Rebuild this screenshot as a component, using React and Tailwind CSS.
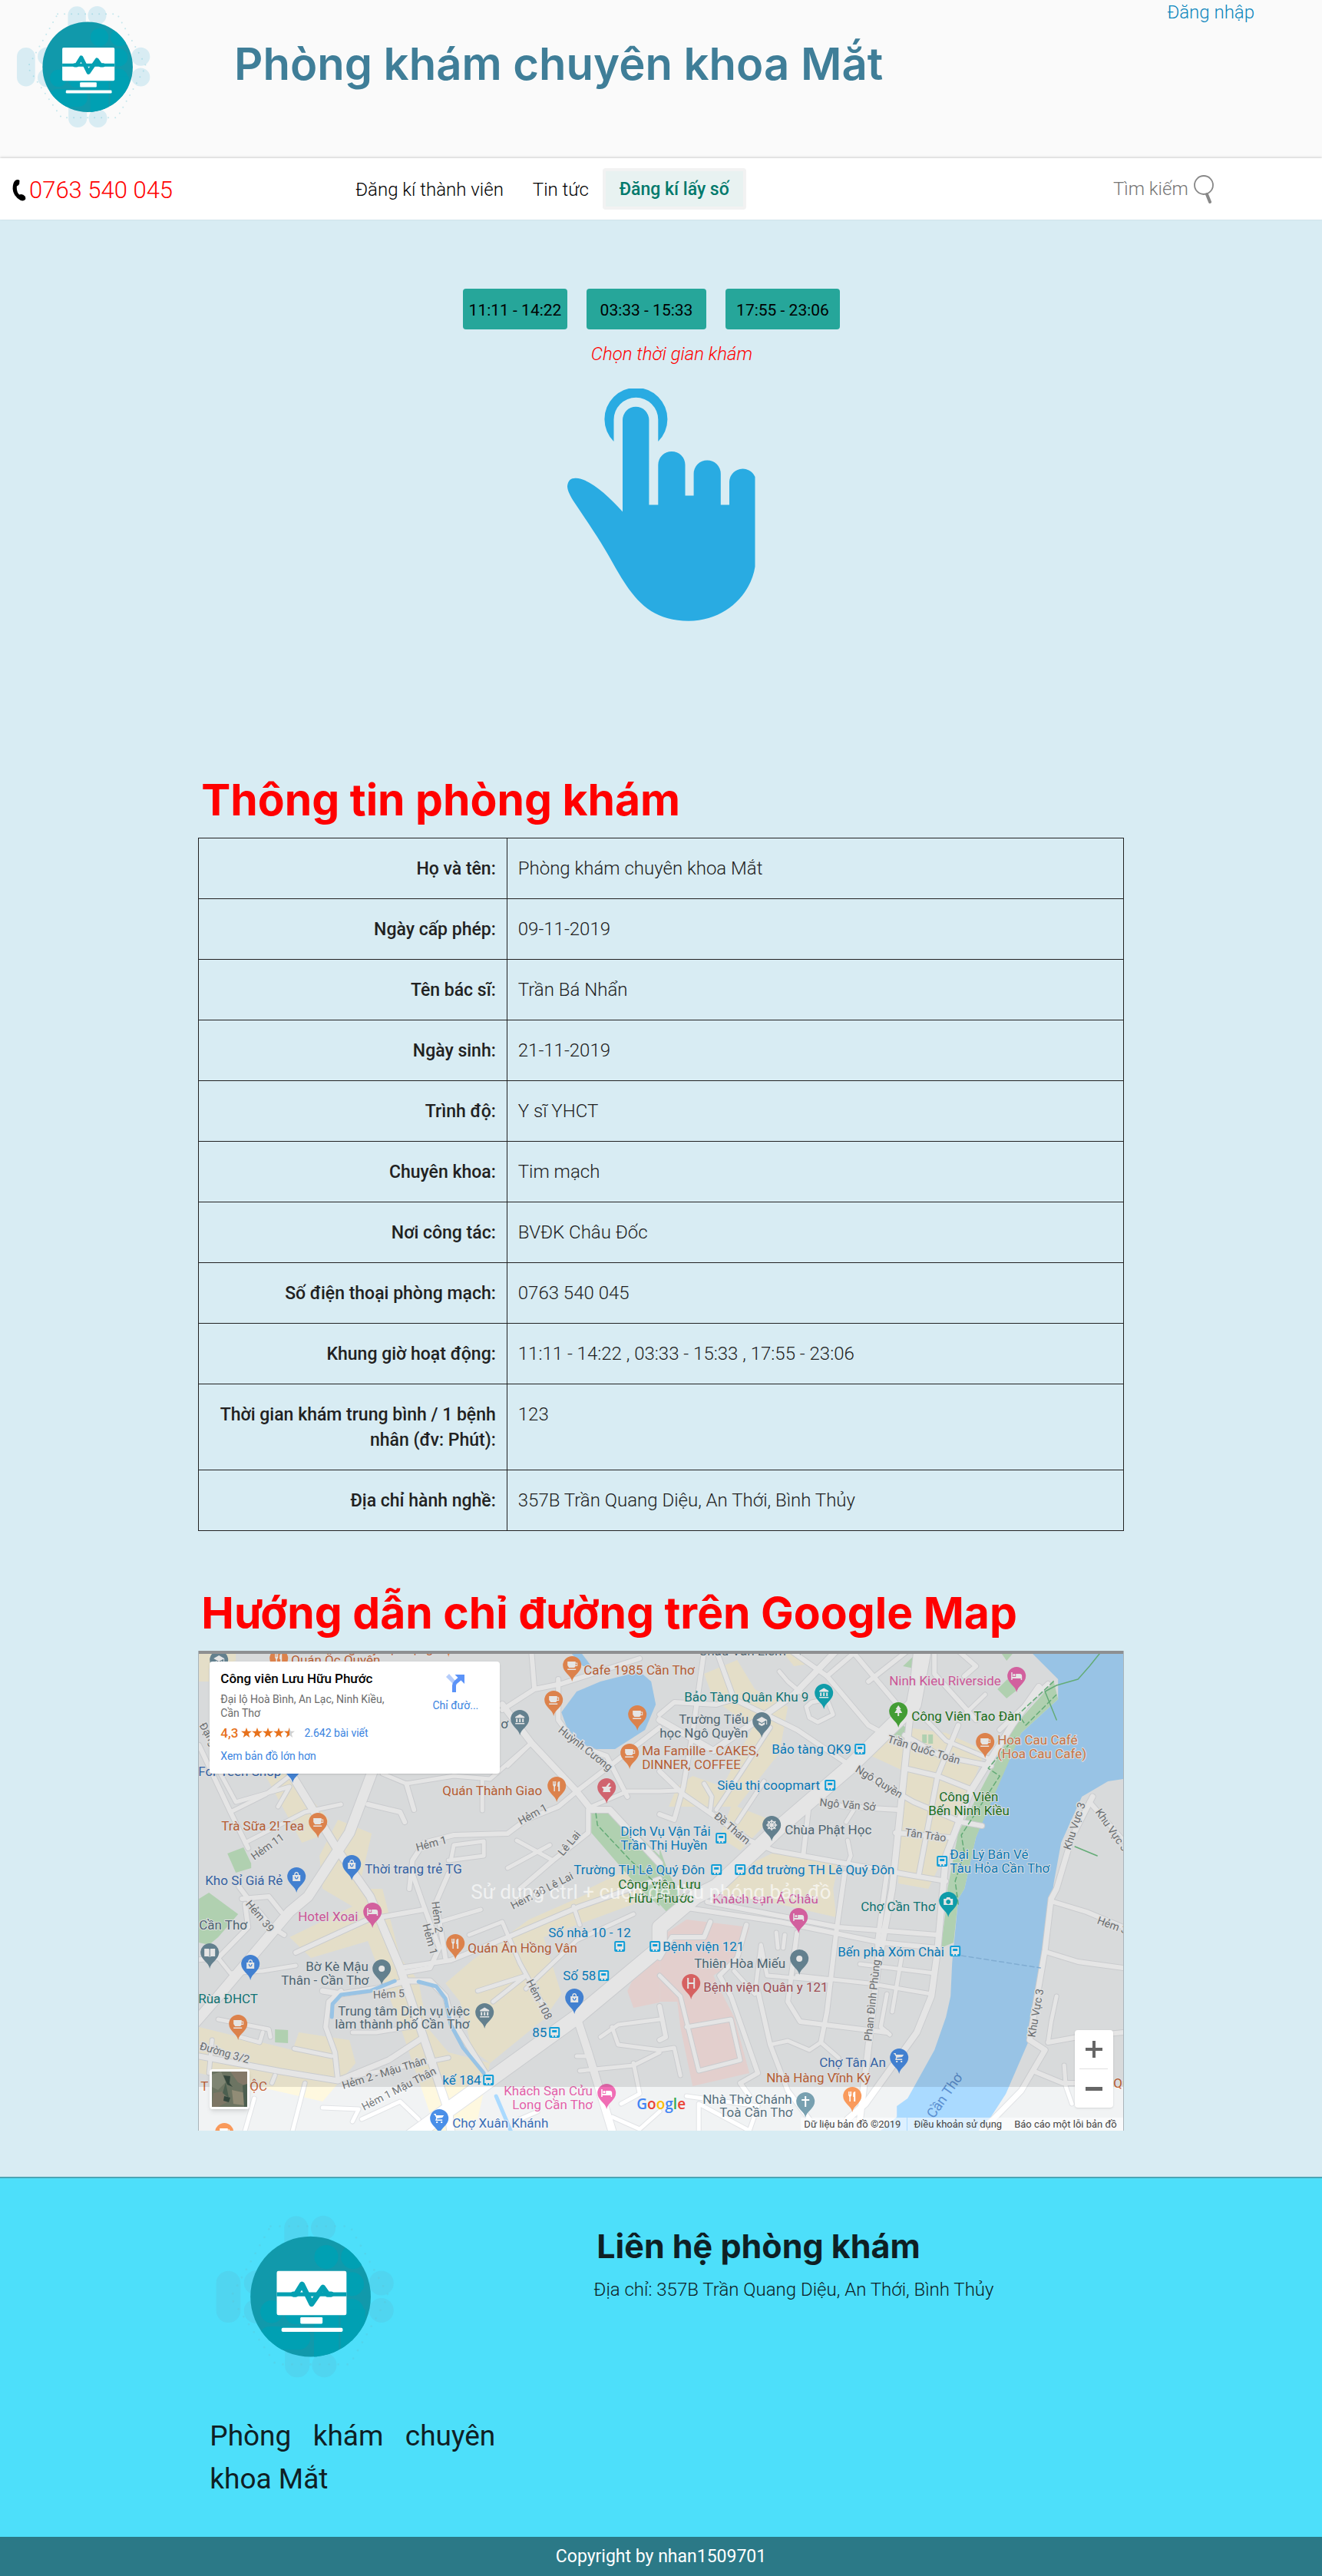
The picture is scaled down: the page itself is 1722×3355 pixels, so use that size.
import React from "react";

const SLOTS = [
  { label: "11:11 - 14:22", width: "w-[136px]" },
  { label: "03:33 - 15:33", width: "w-[156px]" },
  { label: "17:55 - 23:06", width: "w-[149px]" },
];

const INFO = [
  ["Họ và tên:", "Phòng khám chuyên khoa Mắt"],
  ["Ngày cấp phép:", "09-11-2019"],
  ["Tên bác sĩ:", "Trần Bá Nhẩn"],
  ["Ngày sinh:", "21-11-2019"],
  ["Trình độ:", "Y sĩ YHCT"],
  ["Chuyên khoa:", "Tim mạch"],
  ["Nơi công tác:", "BVĐK Châu Đốc"],
  ["Số điện thoại phòng mạch:", "0763 540 045"],
  ["Khung giờ hoạt động:", "11:11 - 14:22 , 03:33 - 15:33 , 17:55 - 23:06"],
  ["Thời gian khám trung bình / 1 bệnh nhân (đv: Phút):", "123"],
  ["Địa chỉ hành nghề:", "357B Trần Quang Diệu, An Thới, Bình Thủy"],
];

function Logo({ className }) {
  return (
    <svg viewBox="60 20 530 485" className={className} aria-hidden="true">
      <defs>
        <clipPath id="disc">
          <circle cx="342" cy="263" r="176" />
        </clipPath>
      </defs>
      <g fill="currentColor">
        <rect x="265" y="27" width="70" height="140" rx="35" />
        <circle cx="379" cy="62" r="36" />
        <rect x="66" y="188" width="71" height="151" rx="35" />
        <circle cx="183" cy="222" r="36" />
        <circle cx="183" cy="305" r="36" />
        <circle cx="549" cy="223" r="36" />
        <circle cx="549" cy="303" r="36" />
        <rect x="267" y="360" width="72" height="139" rx="35" />
        <circle cx="382" cy="463" r="36" />
      </g>
      <path
        d="M225 57H457L570 260L457 461H240L108 265Z"
        fill="none"
        stroke="#5fc4d4"
        strokeOpacity=".35"
        strokeWidth="6"
        strokeLinecap="round"
        strokeDasharray="0 27"
      />
      <circle cx="342" cy="263" r="176" fill="#1199ab" />
      <g fill="#00a0b3" clipPath="url(#disc)">
        <circle cx="388" cy="147" r="35" />
        <circle cx="466" cy="147" r="35" />
        <circle cx="463" cy="226" r="35" />
        <circle cx="463" cy="305" r="35" />
        <circle cx="228" cy="307" r="33" />
        <rect x="265" y="272" width="76" height="72" rx="35" />
        <rect x="190" y="350" width="151" height="68" rx="34" />
        <rect x="352" y="272" width="72" height="180" />
        <rect x="430" y="300" width="72" height="140" />
      </g>
      <g fill="#fff">
        <rect x="243" y="188" width="204" height="129" rx="5" />
        <rect x="312" y="323" width="65" height="19" rx="3" />
        <rect x="257" y="354" width="179" height="12" rx="4" />
      </g>
      <path d="M243 256H447" stroke="#05a0b2" strokeWidth="12" />
      <path
        d="M292 256H299L317 227L345 284L378 236L392 256H402"
        fill="none"
        stroke="#05a0b2"
        strokeWidth="16"
        strokeLinecap="round"
        strokeLinejoin="round"
      />
    </svg>
  );
}

function Hand() {
  return (
    <svg viewBox="0 0 245 303" className="h-[303px] w-[245px]" fill="#29abe2" aria-hidden="true">
      <path d="M60.500 69A41 41 0 1 1 118.300 69V40.600A28.900 28.900 0 0 0 60.500 40.600Z" />
      <path d="M72 160.500V41A17.200 17.200 0 0 1 106.400 41V151.500H118.300V99.500A17.500 17.500 0 0 1 153.500 99.500V139.500H164.600V111A17.500 17.500 0 0 1 199.800 111V151.500H211V122.500A17.500 17.500 0 0 1 244.500 115V232C239 268 206 302.700 158 302.700C108 302.700 86 274 63 234C46 202 27 175 7.600 146C2 137 0 131 0 127C1 119 5 116.500 11 116.700C28 117 52 138 72 160.500Z" />
    </svg>
  );
}

/* The map is digitised as four tiles; every point is tile-local. */
const TILES = { nw: [-9, -10], ne: [601, -10], sw: [-9, 290], se: [601, 290] };
const at = (t, x, y) => [Math.round(x * 0.389 + TILES[t][0]), Math.round(y / 3 + TILES[t][1])];
const line = (s) => {
  let t = "nw";
  return s
    .split(" ")
    .map((p) => {
      if (TILES[p]) {
        t = p;
        return null;
      }
      const [x, y] = p.split(",").map(Number);
      return at(t, x, y).join(" ");
    })
    .filter(Boolean)
    .join("L");
};

const YELLOW = [
  "nw 250,520 330,510 460,690 420,760 370,780",
  "nw 25,40 150,35 150,70 60,100 60,150 25,150",
  "nw 490,690 605,745 560,960 sw 560,60 640,60 700,330 760,420 790,600 860,700 1000,740 960,960 880,1005 750,1005 800,940 690,560 590,265 400,330 330,250 540,130 440,60 nw 430,830",
  "sw 940,340 1130,180 1440,20 1568,0 1500,110 1180,250 1240,470 1180,570 1000,740 940,690 900,500 850,430",
  "sw 25,600 340,690 360,620 530,650 550,740 440,890 25,780",
  "ne 150,120 260,65 320,180 430,250 400,430 260,640 370,690 270,810 200,760 240,640 100,640 30,640 60,560 110,520 210,560 310,330 180,220",
  "ne 830,330 960,350 1090,420 1040,570 1010,690 900,960 800,940 800,800 820,500 710,440 750,380",
  "ne 240,900 380,820 600,860 580,960 se 590,170 400,120 180,80 220,20",
  "nw 1330,960 1500,860 1568,900 sw 1568,40 1440,90 1330,120",
  "ne 410,30 470,40 500,80 450,90",
];
const PINK = [
  "se 0,250 90,180 300,210 270,330 180,400 200,450 250,560 300,780 110,830 70,600 60,500 0,500",
  "sw 1568,320 1510,340 1460,460 1480,525 1568,505",
];
const GREEN = [
  "nw 1340,660 1420,660 1568,830 1568,960 sw 1568,130 nw 1500,960 1340,740",
  "ne 0,800 30,900 60,960 se 70,110 30,160 0,120",
  "nw 122,823 176,797 200,860 200,880 150,898",
  "sw 25,100 60,75 158,158 90,250 60,280 25,270",
  "sw 280,608 325,612 324,663 280,660",
  "ne 815,90 870,30 850,100",
  "ne 760,360 800,310 825,330 810,380",
  "ne 1130,180 1165,140 1200,180 1163,215",
  "ne 1140,30 1190,30 1163,68",
  "ne 880,358 895,358 895,390 880,390",
  "ne 900,358 914,358 914,392 900,392",
  "ne 1320,145 1335,220 1210,350 1060,760 1020,960 se 1000,100 985,270 940,290 965,100 ne 965,960 1000,740 1090,540 1190,320 1290,190",
];
const WATER = [
  "ne 1240,30 1335,140 1335,220 1210,350 1120,580 1060,760 1020,960 se 1000,100 980,350 975,480 960,560 920,690 830,880 795,910 795,950 740,1005 1080,1005 1160,860 1235,660 1270,400 1290,300 1325,0 ne 1315,960 1345,780 1415,600 1500,540 1552,530 1552,30",
  "nw 1240,270 1290,190 1370,150 1500,110 1540,150 1555,240 1520,340 1420,415 1340,415 1270,370",
  "nw 1265,30 1300,30 1340,90 1310,90",
];
const STREAMS = [
  "sw 470,560 472,510 500,475 600,460 680,420",
  "sw 762,422 820,440 850,490 870,590 910,680 980,780",
  "sw 1020,870 1070,1005",
];
const ROADS = [
  [19, "sw 700,1060 1290,560 1568,290 se 0,210 120,90 ne 190,950 400,720 640,480 850,240 885,30"],
  [13, "sw 0,600 90,480 330,150 nw 390,990 530,740 605,510 640,380"],
  [10, "nw 150,170 330,500 490,810 sw 600,90 700,370 860,930 870,1005"],
  [10, "sw 1290,560 1330,700 1410,1005"],
  [8, "ne 860,30 835,320 780,960 se 730,370 670,960"],
  [8, "ne 1270,170 1180,320 1040,580 960,830 se 930,300 910,480 860,620 690,900 630,960"],
  [8, "ne 590,30 450,200 180,420 nw 1568,300"],
  [7, "sw 25,715 300,775 490,810 660,730 780,640"],
  [7, "sw 440,460 500,470 620,450 720,420 800,420 850,480 870,560 990,790"],
  [6, "sw 490,810 480,700 450,600 460,500 500,460"],
  [6, "nw 25,400 130,660 190,800"],
  [5, "nw 130,660 250,590 330,520"],
  [5, "nw 180,780 380,660 500,630"],
  [5, "nw 80,470 150,620 nw 330,560 290,640"],
  [5, "nw 640,510 720,550 880,520 1000,530 1140,390"],
  [6, "nw 590,630 700,660 715,700"],
  [6, "nw 720,550 745,650"],
  [5, "nw 975,540 975,655"],
  [8, "nw 1040,240 1140,390 1290,580 1340,650 1400,650 1568,860"],
  [6, "nw 730,960 740,850 780,780 880,750 1060,745 1120,690 1230,640 1290,580 1568,330"],
  [5, "nw 870,850 880,790 980,775 980,830 860,850"],
  [6, "nw 1330,650 1330,740 1210,850 1100,960"],
  [5, "nw 1090,770 1210,850"],
  [5, "nw 1060,880 1200,790"],
  [6, "nw 1140,30 1150,180 1040,260 nw 1150,180 1240,160 1500,60"],
  [6, "nw 1230,140 1230,300 1290,400 1390,440 1460,600"],
  [5, "nw 1060,480 1140,390"],
  [5, "nw 1340,640 1460,580 1568,580 ne 60,575"],
  [6, "ne 150,30 110,350 80,560 50,690 0,670"],
  [6, "ne 0,500 80,590 300,770 380,810 850,910 960,930"],
  [6, "ne 190,30 250,220 460,340 640,480"],
  [6, "ne 0,280 50,230 190,240 250,220"],
  [6, "ne 440,30 560,130 700,320 760,360"],
  [6, "ne 560,130 650,40 790,230"],
  [6, "ne 700,150 830,30"],
  [5, "ne 400,110 430,150 480,200"],
  [5, "ne 370,330 270,510 190,650"],
  [5, "ne 150,550 175,600 170,650"],
  [5, "ne 350,540 260,700"],
  [5, "ne 490,250 500,290 530,310 580,280 560,220 510,230 490,250"],
  [6, "ne 640,480 850,620 1010,700 1080,715"],
  [6, "ne 820,360 940,440 1110,480"],
  [6, "ne 820,490 930,520 1040,570"],
  [6, "ne 1000,320 930,520 870,900"],
  [6, "ne 500,610 620,640 800,650"],
  [6, "ne 500,620 480,830"],
  [5, "ne 650,650 625,700"],
  [5, "ne 630,770 640,830 630,860"],
  [6, "ne 790,740 970,760"],
  [5, "ne 850,250 960,380 1100,450"],
  [6, "ne 920,30 920,120 1060,300"],
  [6, "ne 1000,30 1060,90 1020,130"],
  [5, "ne 1090,200 1010,290"],
  [6, "ne 1300,160 1140,340"],
  [6, "se 60,130 400,190 740,270 930,290"],
  [6, "se 160,110 600,210 930,240"],
  [6, "se 760,0 730,260 730,370"],
  [6, "se 620,0 590,230 560,540 540,660"],
  [6, "se 460,230 430,500 470,580 760,620"],
  [5, "se 460,400 700,430 910,470"],
  [5, "se 670,355 920,390"],
  [5, "se 760,470 740,600 770,630"],
  [5, "se 810,330 780,540"],
  [5, "se 370,670 430,655 500,690 540,660 600,720"],
  [5, "se 0,400 70,480 130,770 270,730 240,570 90,600"],
  [6, "se 170,190 150,250 40,250 0,330"],
  [6, "se 290,200 260,330 200,400 240,480 330,780 270,820 300,870"],
  [6, "se 330,460 370,670 430,850 500,960"],
  [5, "se 250,380 320,470 340,280 360,400 570,420"],
  [5, "se 390,230 395,290"],
  [5, "se 420,240 415,290"],
  [5, "se 90,870 330,910 300,1005 se 130,900 130,1005"],
  [6, "se 0,520 20,640 0,650"],
  [5, "se 0,690 50,680 70,790"],
  [7, "ne 1450,600 1380,760 1330,960 se 1310,100 1290,300 1240,650 1290,690 1210,850 1080,1005"],
  [6, "se 1320,110 1430,150 1552,210"],
  [6, "se 1300,310 1400,345 1552,370"],
  [6, "se 1250,770 1350,820 1390,820"],
  [6, "se 1300,660 1400,640 1552,620"],
  [5, "se 1330,480 1310,580 1300,660"],
  [5, "se 1355,750 1360,830 1380,900"],
  [6, "ne 1440,620 1552,770"],
  [6, "sw 350,310 590,180 780,140"],
  [6, "sw 160,50 190,100 270,210 310,240"],
  [6, "sw 170,100 260,90 300,150"],
  [6, "sw 0,340 90,330 190,210 180,120"],
  [5, "sw 90,330 130,390 240,380 350,360"],
  [6, "sw 740,0 780,130 830,290 800,370 700,390"],
  [6, "sw 860,0 820,110 850,330"],
  [6, "sw 700,370 870,340 1060,250 1300,130 1568,20"],
  [5, "sw 830,190 970,140"],
  [5, "sw 930,240 1040,190 1100,350 1200,560"],
  [5, "sw 960,460 1120,400 1010,500"],
  [5, "sw 1120,450 1290,260 1480,160"],
  [5, "sw 1280,130 1300,200"],
  [5, "sw 345,685 470,715"],
  [5, "sw 90,570 260,610 265,640"],
  [5, "sw 165,640 230,660 240,620"],
  [5, "sw 70,650 60,780"],
  [5, "sw 280,790 270,820"],
  [5, "sw 500,800 640,770 860,720"],
  [5, "sw 380,820 340,1005"],
  [5, "sw 210,880 180,1005"],
  [5, "sw 440,915 560,920 540,970"],
  [5, "sw 570,960 700,890 760,960"],
  [5, "sw 1370,640 1430,590 1568,570"],
  [5, "sw 1410,600 1430,670 1568,690"],
  [5, "sw 1300,770 1480,750 1568,700"],
  [5, "sw 1290,715 1320,715"],
  [5, "sw 1480,740 1500,860 1440,900"],
  [5, "sw 540,620 620,620 780,590"],
  [5, "sw 1160,930 1100,960"],
  [5, "sw 1410,950 1500,1000 1568,930"],
];

const ORANGE = "#c9683a";
const BLUE = "#3a6db5";
const TRANSIT = "#0b86c9";
const SLATE = "#56707e";
const PINKT = "#e25fa8";
const TEAL = "#128080";
const PARK = "#1e7a1e";
const GREY = "#75787b";

/* tile, x, baseline, colour, lines */
const PLACES = [
  ["nw", 435, 40, ORANGE, "Omega Lý Tự Trọng"],
  ["nw", 335, 84, ORANGE, "Quán Ốc Quyên"],
  ["nw", 1314, 124, ORANGE, "Cafe 1985 Cần Thơ"],
  ["nw", 1510, 438, ORANGE, "Ma Famille - CAKES,|DINNER, COFFEE"],
  ["nw", 1036, 332, SLATE, "ơ"],
  ["nw", 22, 520, BLUE, "For Teen Shop"],
  ["nw", 840, 593, ORANGE, "Quán Thành Giao"],
  ["nw", 101, 733, ORANGE, "Trà Sữa 2! Tea"],
  ["nw", 580, 899, BLUE, "Thời trang trẻ TG"],
  ["nw", 47, 946, BLUE, "Kho Sỉ Giá Rẻ"],
  ["nw", 1437, 752, TRANSIT, "Dịch Vụ Vận Tải|Trần Thị Huyền"],
  ["nw", 1280, 903, TRANSIT, "Trường TH Lê Quý Đôn"],
  ["nw", 1430, 960, PARK, "Công viên Lưu"],
  ["sw", 1463, 115, PARK, "Hữu Phước"],
  ["ne", 130, 48, SLATE, "Châu Văn Liêm"],
  ["ne", 82, 229, TEAL, "Bảo Tàng Quân Khu 9"],
  ["ne", 64, 316, SLATE, "Trường Tiểu"],
  ["ne", 0, 368, SLATE, "học Ngô Quyền"],
  ["ne", 376, 431, TRANSIT, "Bảo tàng QK9"],
  ["ne", 193, 573, TRANSIT, "Siêu thị coopmart"],
  ["ne", 418, 747, SLATE, "Chùa Phật Học"],
  ["ne", 296, 903, TRANSIT, "đd trường TH Lê Quý Đôn"],
  ["ne", 769, 165, PINKT, "Ninh Kieu Riverside"],
  ["ne", 842, 302, PARK, "Công Viên Tao Đàn"],
  ["ne", 1132, 396, "#d9814f", "Hoa Cau Café|(Hoa Cau Cafe)"],
  ["ne", 937, 619, PARK, "Công Viên"],
  ["ne", 900, 672, PARK, "Bến Ninh Kiều"],
  ["ne", 972, 842, TRANSIT, "Đại Lý Bán Vé|Tàu Hỏa Cần Thơ"],
  ["sw", 358, 186, PINKT, "Hotel Xoai"],
  ["sw", 25, 218, SLATE, "Cần Thơ"],
  ["sw", 383, 381, SLATE, "Bờ Kè Mậu"],
  ["sw", 300, 434, SLATE, "Thân - Cần Thơ"],
  ["sw", 22, 508, TEAL, "Rùa ĐHCT"],
  ["sw", 490, 555, SLATE, "Trung tâm Dịch vụ việc"],
  ["sw", 481, 607, SLATE, "làm thành phố Cần Thơ"],
  ["sw", 926, 308, ORANGE, "Quán Ăn Hồng Vân"],
  ["sw", 1195, 248, TRANSIT, "Số nhà 10 - 12"],
  ["sw", 1243, 416, TRANSIT, "Số 58"],
  ["sw", 1142, 640, TRANSIT, "85"],
  ["sw", 840, 824, TRANSIT, "kế 184"],
  ["sw", 30, 850, ORANGE, "T"],
  ["sw", 196, 850, ORANGE, "ỘC"],
  ["sw", 1046, 867, PINKT, "Khách Sạn Cửu"],
  ["sw", 1075, 920, PINKT, "Long Cần Thơ"],
  ["sw", 873, 992, BLUE, "Chợ Xuân Khánh"],
  ["se", 177, 117, PINKT, "Khách sạn Á Châu"],
  ["se", 10, 304, TRANSIT, "Bệnh viện 121"],
  ["se", 115, 368, SLATE, "Thiên Hòa Miếu"],
  ["se", 147, 463, "#b0565e", "Bệnh viện Quân y 121"],
  ["se", 673, 146, TEAL, "Chợ Cần Thơ"],
  ["se", 597, 323, TRANSIT, "Bến phà Xóm Chài"],
  ["se", 534, 755, BLUE, "Chợ Tân An"],
  ["se", 358, 817, ORANGE, "Nhà Hàng Vĩnh Ký"],
  ["se", 143, 900, SLATE, "Nhà Thờ Chánh"],
  ["se", 200, 952, SLATE, "Toà Cần Thơ"],
  ["se", 1518, 838, ORANGE, "Qu"],
];

/* tile, x, baseline, rotation, text */
const STREETS = [
  ["nw", 212, 848, -35, "Hẻm 11"],
  ["nw", 757, 812, -15, "Hẻm 1"],
  ["nw", 1103, 712, -29, "Hẻm 1"],
  ["nw", 1243, 834, -50, "Lê Lai"],
  ["nw", 1225, 345, 38, "Huỳnh Cương"],
  ["nw", 25, 320, 60, "Đặng Trần"],
  ["ne", 760, 388, 17, "Trần Quốc Toản"],
  ["ne", 653, 502, 31, "Ngô Quyền"],
  ["ne", 535, 635, 5, "Ngô Văn Sở"],
  ["ne", 180, 680, 40, "Đề Thám"],
  ["ne", 820, 752, 8, "Tân Trào"],
  ["ne", 1375, 810, -72, "Khu Vực 3"],
  ["ne", 1458, 660, 55, "Khu Vực 3"],
  ["sw", 180, 120, 50, "Hẻm 39"],
  ["sw", 805, 112, 83, "Hẻm 2"],
  ["sw", 775, 200, 75, "Hẻm 1"],
  ["sw", 1078, 140, -27, "Hẻm 88 Lê Lai"],
  ["sw", 608, 490, -3, "Hẻm 5"],
  ["sw", 1122, 422, 63, "Hẻm 108"],
  ["sw", 25, 688, 16, "Đường 3/2"],
  ["sw", 508, 844, -17, "Hẻm 2 - Mậu Thân"],
  ["sw", 578, 926, -27, "Hẻm 1 Mậu Thân"],
  ["se", 710, 656, -84, "Phan Đình Phùng"],
  ["se", 1258, 642, -80, "Khu Vực 3"],
  ["se", 1463, 195, 20, "Hẻm 3"],
];

/* tile, x centre, top, colour, glyph */
const PINS = [
  ["nw", 92, 30, "#6f8f9f", "cap"],
  ["nw", 294, 25, "#f59155", "fork"],
  ["nw", 860, -45, "#f59155", "cup"],
  ["nw", 1274, 52, "#f59155", "cup"],
  ["nw", 1213, 186, "#f59155", "cup"],
  ["nw", 1493, 244, "#f59155", "cup"],
  ["nw", 1468, 394, "#f59155", "cup"],
  ["nw", 1101, 262, "#6f8f9f", "bank"],
  ["nw", 339, 448, "#4a8fe8", "bag"],
  ["nw", 1224, 521, "#f59155", "fork"],
  ["nw", 1391, 527, "#e8707c", "mortar"],
  ["nw", 424, 662, "#f59155", "cup"],
  ["nw", 537, 827, "#4a8fe8", "bag"],
  ["nw", 352, 877, "#4a8fe8", "bag"],
  ["ne", 470, -50, "#6f8f9f", "dot"],
  ["ne", 550, 158, "#12aebd", "bank"],
  ["ne", 343, 270, "#6f8f9f", "cap"],
  ["ne", 376, 675, "#6f8f9f", "wheel"],
  ["ne", 1195, 94, "#ea6bb0", "bed"],
  ["ne", 800, 231, "#4caf3c", "tree"],
  ["ne", 1090, 351, "#f59155", "cup"],
  ["sw", 606, 114, "#ea6bb0", "bed"],
  ["sw", 61, 274, "#6f8f9f", "book"],
  ["sw", 198, 318, "#4a8fe8", "bag"],
  ["sw", 638, 336, "#6f8f9f", "dot"],
  ["sw", 884, 236, "#f59155", "fork"],
  ["sw", 982, 508, "#6f8f9f", "bank"],
  ["sw", 1284, 450, "#4a8fe8", "bag"],
  ["sw", 158, 552, "#f59155", "cup"],
  ["sw", 1390, 822, "#f06eb5", "bed"],
  ["sw", 831, 921, "#4a8fe8", "cart"],
  ["sw", 111, 976, "#f99a5c", "cup"],
  ["se", 466, 136, "#ea6bb0", "bed"],
  ["se", 468, 296, "#6f8f9f", "dot"],
  ["se", 105, 393, "#ef6d6d", "h"],
  ["se", 967, 73, "#12aebd", "camera"],
  ["se", 802, 683, "#4a8fe8", "cart"],
  ["se", 644, 835, "#f99a5c", "fork"],
  ["se", 489, 855, "#78a0b0", "cross"],
];

const GLYPHS = {
  cup: <path d="M-6-5H4.500V-3.500H7V1H4.500L3 3H-4L-6 0ZM4.500-2.500V0H6V-2.500ZM-6 4.500H5V6H-6Z" />,
  fork: <path d="M-5-6H-4V-2H-3.500V-6H-2.500V-2H-2V-6H-1V-1L-2.300 1V7H-3.800V1L-5-1ZM2 7V1H1V-3Q1-6 4-6V7Z" />,
  bag: <path d="M-5-2H-3Q-3-6 0-6T3-2H5V6H-5ZM-1.800-2H1.800Q1.500-4.800 0-4.800T-1.800-2ZM-2.500 0Q-2 3.500 0 3.500T2.500 0H1.300Q1 2.300 0 2.300T-1.300 0Z" fillRule="evenodd" />,
  cap: <path d="M-7-2L0-6L7-2L0 2ZM-4 1L0 3.200L4 1V4L0 6L-4 4ZM6-2H7V4H6Z" />,
  bank: <path d="M-6-3L0-6.500L6-3V-1.500H-6ZM-5-.500H-3V4H-5ZM-1-.500H1V4H-1ZM3-.500H5V4H3ZM-6 5H6V6.500H-6Z" />,
  bed: <path d="M-7-5H-5.500V1H-1V-3H4Q7-3 7 0V5H5.500V3H-5.500V5H-7ZM-3.200-3A1.600 1.600 0 1 1-3.300-3Z" />,
  tree: <path d="M0-8L3.500-3H2L5 2H1V6H-1V2H-5L-2-3H-3.500Z" />,
  cart: <path d="M-7-6H-4.500L-4-4H6L4-1L-3 0V1.500H4V3H-5L-4-1L-6-4.800H-7ZM-4 4H-2V6H-4ZM2 4H4V6H2Z" />,
  book: <path d="M-7-5H-1L-.5-4V6L-2 5H-7ZM7-5H1L.5-4V6L2 5H7Z" />,
  camera: <path d="M-6-3H-3L-2-5H2L3-3H6V5H-6ZM0-2A3 3 0 1 0 .1-2Z" fillRule="evenodd" />,
  cross: <path d="M-1-7H1V-3H5V-1H1V7H-1V-1H-5V-3H-1Z" />,
  mortar: <path d="M-6-1H-1L3-6L5-5L2-1H6V0L4 2L5 6H-5L-4 2L-6 0Z" />,
  h: <path d="M-5-7H-3V-1H3V-7H5V7H3V1H-3V7H-5Z" />,
  dot: <circle r="4" />,
  wheel: (
    <g fill="none" stroke="#fff" strokeWidth="1.500">
      <circle r="5" />
      <path d="M-7 0H7M0-7V7M-5-5L5 5M-5 5L5-5" />
    </g>
  ),
};

const STOPS = [
  ["ne", 671, 413],
  ["ne", 571, 554],
  ["ne", 205, 761],
  ["ne", 190, 886],
  ["ne", 270, 885],
  ["ne", 946, 851],
  ["sw", 1434, 284],
  ["sw", 1553, 286],
  ["sw", 1380, 399],
  ["sw", 1215, 622],
  ["sw", 996, 806],
  ["se", 989, 304],
];

function MapCanvas() {
  return (
    <svg
      viewBox="0 0 1205 625"
      preserveAspectRatio="xMidYMid slice"
      className="block h-[625px] w-full bg-[#f1f3f4]"
      role="img"
      aria-label="Bản đồ Công viên Lưu Hữu Phước"
      fontFamily='Roboto, "Noto Sans", sans-serif'
    >
      {YELLOW.map((p) => (
        <path key={p} d={`M${line(p)}Z`} fill="#fef8df" />
      ))}
      {PINK.map((p) => (
        <path key={p} d={`M${line(p)}Z`} fill="#fde7e5" />
      ))}
      {GREEN.slice(0, -1).map((p) => (
        <path key={p} d={`M${line(p)}Z`} fill="#c5e8c5" />
      ))}
      {WATER.map((p) => (
        <path key={p} d={`M${line(p)}Z`} fill="#aadaff" />
      ))}
      <path d={`M${line(GREEN[GREEN.length - 1])}Z`} fill="#c5e8c5" />
      <g fill="none" strokeLinecap="round" strokeLinejoin="round">
        {ROADS.map(([w, p]) => (
          <path key={p} d={`M${line(p)}`} stroke="#e1e3e6" strokeWidth={w + 2} />
        ))}
        {ROADS.map(([w, p]) => (
          <path key={p} d={`M${line(p)}`} stroke="#ffffff" strokeWidth={w} />
        ))}
        {STREAMS.map((p) => (
          <path key={p} d={`M${line(p)}`} stroke="#aadaff" strokeWidth="5" />
        ))}
        <g stroke="#6fbf84" strokeWidth="1.500">
          <path d={`M${line("ne 1480,30 1440,90 1400,140 1330,165 1290,190 1330,300")}`} />
          <path d={`M${line("ne 1390,795 1465,832")}`} />
          <path strokeDasharray="6 4" d={`M${line("ne 1320,150 1200,280 1225,320 1330,200")}`} />
          <path strokeDasharray="6 4" d={`M${line("ne 1190,370 1100,490 1140,520 1010,750 1020,820 990,930 se 1000,120")}`} />
          <path strokeDasharray="6 4" d={`M${line("nw 1355,665 1360,710 1470,850 1568,950")}`} />
        </g>
        <path strokeDasharray="6 4" stroke="#8fc0ea" strokeWidth="1.500" d={`M${line("se 1010,320 1275,370")}`} />
      </g>
      <g fill={GREY} fontSize="14" stroke="#f7f8f9" strokeWidth="3" paintOrder="stroke">
        {STREETS.map(([t, x, y, r, s]) => {
          const [px, py] = at(t, x, y);
          return (
            <text key={t + x} transform={`translate(${px} ${py}) rotate(${r})`}>
              {s}
            </text>
          );
        })}
      </g>
      <text transform="translate(958 610) rotate(-55)" fontSize="18" fill="#5b8fd0">
        Cần Thơ
      </text>
      <g fontSize="17" stroke="#f7f8f9" strokeWidth="2" strokeLinejoin="round" paintOrder="stroke">
        {PLACES.map(([t, x, y, c, s]) => {
          const [px, py] = at(t, x, y);
          return s.split("|").map((row, i) => (
            <text key={t + x + row} x={px} y={py + i * 18} fill={c}>
              {row}
            </text>
          ));
        })}
      </g>
      {PINS.map(([t, x, y, c, g]) => {
        const [px, py] = at(t, x, y);
        return (
          <g key={t + x + y} transform={`translate(${px} ${py + 12})`} fill="#fff">
            <path d="M0 21C-1 13-12 9-12 0A12 12 0 1 1 12 0C12 9 1 13 0 21Z" fill={c} />
            {GLYPHS[g]}
          </g>
        );
      })}
      {STOPS.map(([t, x, y]) => {
        const [px, py] = at(t, x, y);
        return (
          <g key={t + x + y} transform={`translate(${px} ${py})`}>
            <rect x="-7" y="-7" width="14" height="14" rx="2" fill="#12b0f0" />
            <path d="M-5-5H5V4H3V6H1V4H-1V6H-3V4H-5ZM-3-3V0H3V-3Z" fill="#fff" fillRule="evenodd" />
          </g>
        );
      })}
      <path d="M0 0H1205V568H0Z" fillOpacity=".1" />
      <text x="355" y="323" fontSize="26" fill="#fff" fillOpacity=".65">
        Sử dụng ctrl + cuộn để thu phóng bản đồ
      </text>
    </svg>
  );
}

function GoogleMark() {
  return (
    <span className="font-['Open_Sans',sans-serif] text-[19px] leading-6 font-semibold">
      <span className="text-[#4285f4]">G</span>
      <span className="text-[#ea4335]">o</span>
      <span className="text-[#fbbc05]">o</span>
      <span className="text-[#4285f4]">g</span>
      <span className="text-[#34a853]">l</span>
      <span className="text-[#ea4335]">e</span>
    </span>
  );
}

function ClinicMap() {
  return (
    <div className="relative overflow-hidden border-x border-[#a9b4ba] font-[Roboto,'Noto_Sans',sans-serif] font-normal">
      <MapCanvas />
      <div className="absolute inset-x-0 top-0 h-1 bg-[#8e8f91]" />
      <div className="absolute top-[14px] left-[14px] flex h-[146px] w-[378px] justify-between rounded-sm bg-white pt-[12px] pr-[28px] pl-[14px] shadow">
        <div>
          <div className="text-[17px] leading-5 font-medium text-black">Công viên Lưu Hữu Phước</div>
          <div className="mt-2 w-[236px] text-[14px] leading-[18px] text-[#6b6b6b]">
            Đại lộ Hoà Bình, An Lạc, Ninh Kiều, Cần Thơ
          </div>
          <div className="mt-2 flex items-center text-[14px] leading-[18px]">
            <span className="text-[17px] font-medium text-[#e7711b]">4,3</span>
            <svg viewBox="0 0 70 14" className="ml-1 h-[14px] w-[70px]" aria-hidden="true">
              {[0, 1, 2, 3, 4].map((i) => (
                <path
                  key={i}
                  transform={`translate(${7 + i * 14} 7)`}
                  fill={i === 4 ? "#d0d0d0" : "#e7711b"}
                  d="M0-7L1.700-2.300H7L2.700 1L4.300 6L0 3L-4.300 6L-2.700 1L-7-2.300H-1.700Z"
                />
              ))}
              <path transform="translate(63 7)" fill="#e7711b" d="M0-7V3L-4.300 6L-2.700 1L-7-2.300H-1.700Z" />
            </svg>
            <a href="#reviews" className="ml-3 text-[#3a84df]">
              2.642 bài viết
            </a>
          </div>
          <a href="#map" className="mt-3 block text-[14px] leading-[18px] text-[#3a84df]">
            Xem bản đồ lớn hơn
          </a>
        </div>
        <a href="#directions" className="flex flex-col items-center pt-1 text-[14px] leading-[18px] text-[#3a84df]">
          <svg viewBox="0 0 24 24" className="h-6 w-6" aria-hidden="true">
            <path d="M0 4L4 0L12 9L9 13Z" fill="#b5cdfb" />
            <path d="M8 24V15Q8 12 11 9L15.500 5L11.500 1H24V13L19.500 8.500L14 13Q13 14 13 16V24Z" fill="#5b93f8" />
          </svg>
          <span className="mt-2">Chỉ đườ...</span>
        </a>
      </div>
      <button
        type="button"
        aria-label="Ảnh vệ tinh"
        className="absolute bottom-[28px] left-[14px] h-[52px] w-[52px] overflow-hidden rounded-sm border-[3px] border-white bg-[#6d7564] shadow-md"
      >
        <svg viewBox="0 0 46 46" className="h-full w-full" aria-hidden="true">
          <path d="M0 0H46V46H0Z" fill="#6c7462" />
          <path d="M0 4L12 0L18 14L8 24L0 20Z" fill="#7f8573" />
          <path d="M24 0H46V20L34 14Z" fill="#837868" />
          <path d="M26 24L44 28L42 44L28 42Z" fill="#918c76" />
          <path d="M2 28L14 26L20 40L8 46H0Z" fill="#7d7665" />
          <path d="M15 5L24 6L23 15L27 20L20 17ZM16 32L24 34L22 40L15 38Z" fill="#33463c" />
          <path d="M18 14L22 34L14 28ZM40 18L46 16V46H42Z" fill="#4c5f50" />
        </svg>
      </button>
      <div className="absolute right-[13px] bottom-[30px] flex w-[50px] flex-col items-center rounded-sm bg-white shadow">
        <button type="button" aria-label="Phóng to" className="flex h-[50px] w-full items-center justify-center">
          <svg viewBox="0 0 22 22" className="h-[22px] w-[22px]" aria-hidden="true">
            <path d="M9 0H13V9H22V13H13V22H9V13H0V9H9Z" fill="#666" />
          </svg>
        </button>
        <div className="h-px w-[37px] bg-[#e0e0e0]" />
        <button type="button" aria-label="Thu nhỏ" className="flex h-[50px] w-full items-center justify-center">
          <svg viewBox="0 0 22 22" className="h-[22px] w-[22px]" aria-hidden="true">
            <path d="M0 9H22V14H0Z" fill="#666" />
          </svg>
        </button>
      </div>
      <div className="absolute bottom-[19px] left-[570px]">
        <GoogleMark />
      </div>
      <div className="absolute right-0 bottom-0 flex bg-white/60 text-[13px] leading-[17px] text-[#444]">
        <span className="pr-2 pl-1">Dữ liệu bản đồ ©2019</span>
        <a href="#terms" className="border-l border-[#aadaff] px-2">
          Điều khoản sử dụng
        </a>
        <a href="#report" className="px-2">
          Báo cáo một lỗi bản đồ
        </a>
      </div>
    </div>
  );
}

export default function App() {
  return (
    <div className="bg-[#d8ecf3] font-[Roboto,'Noto_Sans',sans-serif] text-[24px] leading-[33px] font-light text-[#212121]">
      <header className="flex items-start bg-[#fafafa] pt-[6px] pb-[38px] pl-5">
        <Logo className="h-[162px] w-[177px] shrink-0 text-[#d8ecf3]" />
        <h1 className="mt-11 ml-[108px] font-[Inter,'Noto_Sans',sans-serif] text-[58px] leading-[66px] font-semibold text-[#3f7e98]">
          Phòng khám chuyên khoa Mắt
        </h1>
        <a href="#login" className="-mt-[6px] mr-[88px] ml-auto text-[#0d87bd]">
          Đăng nhập
        </a>
      </header>

      <nav className="relative flex items-center bg-white py-[13px] pl-4 text-black shadow-[0_-1px_3px_rgba(0,0,0,0.18)]">
        <a href="tel:0763540045" className="flex w-[447px] items-center gap-1 pt-1 text-[31px] leading-[50px] text-[#ff0000]">
          <svg viewBox="50 695 55 90" className="h-[30px] w-[18px]" aria-hidden="true">
            <path
              fill="#000"
              d="M62 700Q72 694 79 700L78 715Q72 723 68 723Q66 745 78 757Q92 752 102 765L103 774Q95 785 82 779Q54 762 52 735Q51 710 62 700Z"
            />
          </svg>
          0763 540 045
        </a>
        <a href="#register" className="pt-[3px]">
          Đăng kí thành viên
        </a>
        <a href="#news" className="ml-[38px] pt-[3px]">
          Tin tức
        </a>
        <button
          type="button"
          className="ml-[18px] h-[54px] rounded-sm border-4 border-[#f2f2f2] bg-[#e8f2f1] px-[18px] text-[23px] font-medium text-[#00796b]"
        >
          Đăng kí lấy số
        </button>
        <form className="mr-[139px] ml-auto flex items-center">
          <input
            type="text"
            aria-label="Tìm kiếm"
            placeholder="Tìm kiếm"
            className="w-[105px] bg-transparent outline-none placeholder:text-[#757575]"
          />
          <button type="submit" aria-label="Tìm">
            <svg viewBox="0 0 28 38" className="h-[38px] w-[28px]" fill="none" stroke="#888" aria-hidden="true">
              <circle cx="13" cy="14" r="12" strokeWidth="1.800" />
              <path d="M17 26L21 36" strokeWidth="4" strokeLinecap="round" />
            </svg>
          </button>
        </form>
      </nav>

      <section className="flex flex-col items-center pt-[90px]">
        <div className="flex gap-[25px] pr-[25px]">
          {SLOTS.map((s) => (
            <button
              key={s.label}
              type="button"
              className={`h-[53px] rounded-sm bg-[#26a69a] pt-1 text-center text-[21px] font-normal whitespace-nowrap text-black ${s.width}`}
            >
              {s.label}
            </button>
          ))}
        </div>
        <p className="mt-4 pl-7 text-[#ff0000] italic">Chọn thời gian khám</p>
        <div className="mt-7">
          <Hand />
        </div>
      </section>

      <main className="mx-auto w-[70%]">
        <h2 className="mt-[200px] pl-1 font-[Inter,'Noto_Sans',sans-serif] text-[57px] leading-[66px] font-bold text-[#ff0000]">
          Thông tin phòng khám
        </h2>
        <table className="mt-4 w-full table-fixed border-collapse border border-[#222]">
          <tbody>
            {INFO.map(([k, v]) => (
              <tr key={k} className="align-top">
                <th
                  scope="row"
                  className="w-1/3 border border-[#222] px-[14px] pt-[23px] pb-[22px] text-right text-[23px] font-medium"
                >
                  {k}
                </th>
                <td className="border border-[#222] px-[14px] pt-[23px] pb-[22px]">{v}</td>
              </tr>
            ))}
          </tbody>
        </table>
        <h2 className="mt-[74px] pl-1 font-[Inter,'Noto_Sans',sans-serif] text-[57px] leading-[66px] font-bold text-[#ff0000]">
          Hướng dẫn chỉ đường trên Google Map
        </h2>
        <div className="mt-4 mb-[60px]">
          <ClinicMap />
        </div>
      </main>

      <footer>
        <div className="border-t-2 border-[#4aa5b5] bg-[#4ddffa]">
          <div className="mx-auto flex w-[70%] pt-[46px] pb-[47px] text-[#0f2024]">
            <div className="w-[387px] shrink-0 pl-[15px]">
              <Logo className="ml-[6px] h-[216px] w-[236px] text-[#50d5f0]" />
              <p className="mt-[46px] text-justify text-[37px] leading-[56px] font-normal">Phòng khám chuyên khoa Mắt</p>
            </div>
            <div className="pl-[128px]">
              <h3 className="mt-[17px] ml-1 font-[Inter,'Noto_Sans',sans-serif] text-[43px] leading-[50px] font-bold">
                Liên hệ phòng khám
              </h3>
              <p className="mt-[16px]">Địa chỉ: 357B Trần Quang Diệu, An Thới, Bình Thủy</p>
            </div>
          </div>
        </div>
        <div className="bg-[#2b7987] py-[9px] text-center text-[23px] font-normal text-white">Copyright by nhan1509701</div>
      </footer>
    </div>
  );
}
